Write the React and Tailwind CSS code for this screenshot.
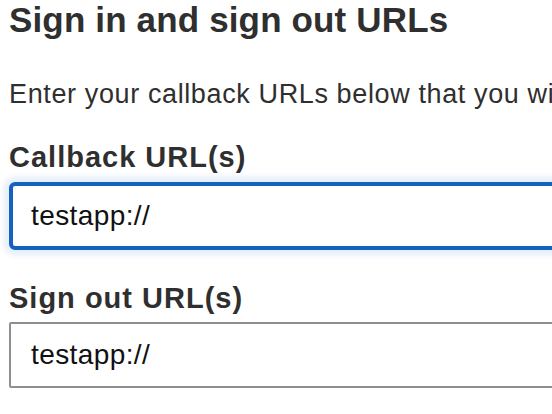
import React from "react";

const font = { fontFamily: '"Liberation Sans", Arial, sans-serif' };

const UrlField = ({ label, value, focused, className }) => {
  return (
    <div className={className}>
      <div className="text-[29px] leading-[32px] font-bold tracking-[1px] text-[#2f2f2f] whitespace-nowrap">
        {label}
      </div>
      <div
        className={`flex items-center w-[640px] bg-white ${
          focused
            ? "mt-[9px] h-[68px] border-4 border-[#1561be] rounded-[6px] shadow-[0_0_6px_5px_#e4eefa]"
            : "mt-[8px] h-[66px] border-2 border-[#8f8f8f] rounded-[2px]"
        }`}
      >
        <span
          className={`text-[28px] leading-[32px] tracking-[0.4px] text-[#111] whitespace-nowrap ${
            focused ? "pl-[18px]" : "pl-[20px]"
          }`}
        >
          {value}
        </span>
      </div>
    </div>
  );
};

export default function App() {
  return (
    <div
      className="w-[552px] h-[414px] overflow-hidden bg-white pl-[9px]"
      style={font}
    >
      <h1 className="text-[35px] leading-[40px] font-bold tracking-[0.15px] text-[#2f2f2f] whitespace-nowrap">
        Sign in and sign out URLs
      </h1>
      <p className="mt-[38px] text-[27px] leading-[32px] tracking-[0.62px] text-[#2f2f2f] whitespace-nowrap">
        Enter your callback URLs below that you will refer to in your SDK code
      </p>
      <UrlField
        className="mt-[31px]"
        label="Callback URL(s)"
        value="testapp://"
        focused
      />
      <UrlField
        className="mt-[32px]"
        label="Sign out URL(s)"
        value="testapp://"
      />
    </div>
  );
}
